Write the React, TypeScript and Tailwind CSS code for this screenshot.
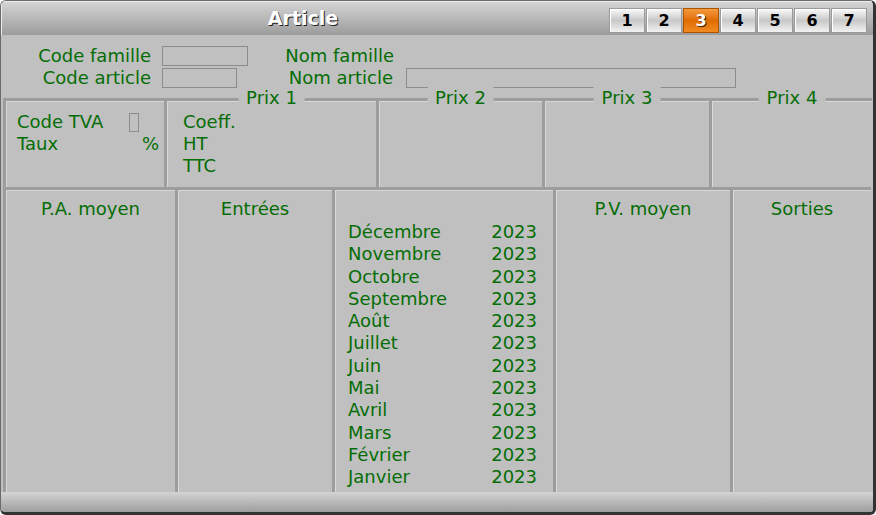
import React from "react";

const green = "text-[#056d05]";

const months = [
  "Décembre",
  "Novembre",
  "Octobre",
  "Septembre",
  "Août",
  "Juillet",
  "Juin",
  "Mai",
  "Avril",
  "Mars",
  "Février",
  "Janvier",
];

const cell =
  "border-l-[3px] border-t-[3px] border-[#9d9d9d] shadow-[inset_1px_1px_0_#d9d9d9]";

function TabButton({ n, active }: { n: number; active?: boolean }) {
  return (
    <div
      className={
        active
          ? "flex h-[25px] w-[36px] items-center justify-center border border-[#a85400] bg-gradient-to-b from-[#f59a3a] via-[#e06c00] to-[#f08a20] text-[16px] font-bold text-white [text-shadow:1px_1px_0_#3a2000]"
          : "flex h-[25px] w-[36px] items-center justify-center border border-[#9a9a9a] bg-gradient-to-b from-[#fafafa] via-[#c8c8c8] to-[#f2f2f2] text-[16px] font-bold text-black shadow-[inset_1px_1px_0_#ffffff]"
      }
    >
      {n}
    </div>
  );
}

function PrixCell({ label, width }: { label: string; width: string }) {
  return (
    <div className={`relative ${width} ${cell}`}>
      <span className="absolute left-1/2 top-[-14px] -translate-x-1/2 bg-[#c0c0c0] px-2 leading-[22px]">
        {label}
      </span>
    </div>
  );
}

export default function App() {
  return (
    <div
      className={`flex h-[515px] w-[876px] flex-col overflow-hidden rounded-[6px] border-l border-t border-[#6a6a6a] border-b-[3px] border-r-[3px] border-b-[#333333] border-r-[#333333] bg-[#c0c0c0] text-[18px] ${green}`}
      style={{ fontFamily: '"DejaVu Sans", Verdana, sans-serif' }}
    >
      {/* title bar */}
      <div className="flex h-[34px] shrink-0 items-start bg-gradient-to-b from-[#d6d6d6] to-[#9c9c9c] shadow-[inset_1px_1px_0_#eeeeee]">
        <div className="flex h-[34px] flex-1 items-center justify-center pr-[4px] text-[19px] font-bold text-white [text-shadow:1px_1px_0_#202020]">
          Article
        </div>
        <div className="mr-[6px] mt-[7px] flex gap-[1px]">
          {[1, 2, 3, 4, 5, 6, 7].map((n) => (
            <TabButton key={n} n={n} active={n === 3} />
          ))}
        </div>
      </div>

      {/* header fields */}
      <div className="flex h-[63px] shrink-0 flex-col gap-[2px] pt-[11px]">
        <div className="flex h-[20px] items-center">
          <span className="w-[150px] text-right leading-[20px]">Code famille</span>
          <div className="ml-[11px] w-[86px]">
            <div className="h-[20px] w-[86px] border border-[#8c8c8c]" />
          </div>
          <span className="w-[146px] text-right leading-[20px]">Nom famille</span>
        </div>
        <div className="flex h-[20px] items-center">
          <span className="w-[150px] text-right leading-[20px]">Code article</span>
          <div className="ml-[11px] w-[86px]">
            <div className="h-[20px] w-[75px] border border-[#8c8c8c]" />
          </div>
          <span className="w-[145px] text-right leading-[20px]">Nom article</span>
          <div className="ml-[13px] h-[20px] w-[330px] border border-[#8c8c8c]" />
        </div>
      </div>

      {/* prix */}
      <div className="flex h-[89px] shrink-0 pl-[2px] pr-[1px]">
        <div className={`w-[161px] pl-[11px] pr-[5px] pt-[10px] ${cell}`}>
          <div className="flex h-[22px] items-center justify-between leading-[22px]">
            <span>Code TVA</span>
            <span className="mr-[20px] h-[19px] w-[10px] border border-[#8c8c8c]" />
          </div>
          <div className="flex h-[22px] items-center justify-between leading-[22px]">
            <span>Taux</span>
            <span>%</span>
          </div>
        </div>
        <div className={`relative w-[212px] pl-[16px] pt-[10px] ${cell}`}>
          <span className="absolute left-1/2 top-[-14px] -translate-x-1/2 bg-[#c0c0c0] px-2 leading-[22px]">
            Prix 1
          </span>
          <div className="leading-[22px]">Coeff.</div>
          <div className="leading-[22px]">HT</div>
          <div className="leading-[22px]">TTC</div>
        </div>
        <PrixCell label="Prix 2" width="w-[166px]" />
        <PrixCell label="Prix 3" width="w-[167px]" />
        <PrixCell label="Prix 4" width="w-[163px]" />
      </div>

      {/* stats */}
      <div className="flex h-[305px] shrink-0 pl-[2px] pr-[1px]">
        <div className={`w-[172px] pt-[8px] text-center leading-[22px] ${cell}`}>P.A. moyen</div>
        <div className={`w-[157px] pt-[8px] text-center leading-[22px] ${cell}`}>Entrées</div>
        <div className={`w-[221px] pl-[13px] pr-[16px] pt-[31px] ${cell}`}>
          {months.map((m) => (
            <div key={m} className="flex justify-between leading-[22.3px]">
              <span>{m}</span>
              <span>2023</span>
            </div>
          ))}
        </div>
        <div className={`w-[177px] pt-[8px] text-center leading-[22px] ${cell}`}>P.V. moyen</div>
        <div className={`w-[141px] pt-[8px] text-center leading-[22px] ${cell}`}>Sorties</div>
      </div>

      {/* bottom bar */}
      <div className="flex-1 bg-gradient-to-b from-[#d4d4d4] to-[#9e9e9e]" />
    </div>
  );
}
